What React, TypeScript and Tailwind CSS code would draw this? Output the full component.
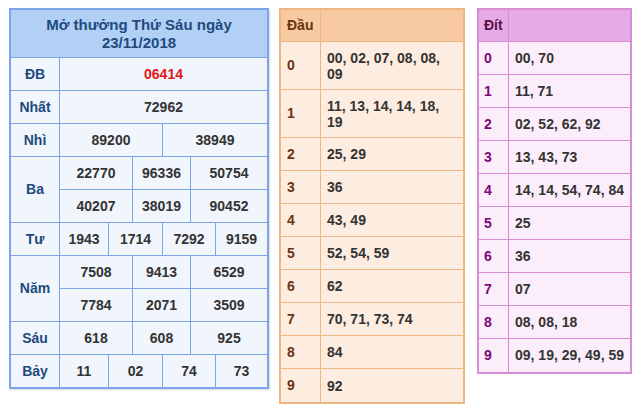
import React from 'react';

const font = { fontFamily: '"Liberation Sans", Arial, sans-serif' };

type Cell = { v: string; w: number; red?: boolean };
type Row = { label: string; lines: Cell[][] };

const results: Row[] = [
  { label: 'ĐB', lines: [[{ v: '06414', w: 207, red: true }]] },
  { label: 'Nhất', lines: [[{ v: '72962', w: 207 }]] },
  { label: 'Nhì', lines: [[{ v: '89200', w: 103 }, { v: '38949', w: 104 }]] },
  {
    label: 'Ba',
    lines: [
      [{ v: '22770', w: 73 }, { v: '96336', w: 58 }, { v: '50754', w: 76 }],
      [{ v: '40207', w: 73 }, { v: '38019', w: 58 }, { v: '90452', w: 76 }],
    ],
  },
  { label: 'Tư', lines: [[{ v: '1943', w: 49 }, { v: '1714', w: 54 }, { v: '7292', w: 53 }, { v: '9159', w: 51 }]] },
  {
    label: 'Năm',
    lines: [
      [{ v: '7508', w: 73 }, { v: '9413', w: 58 }, { v: '6529', w: 76 }],
      [{ v: '7784', w: 73 }, { v: '2071', w: 58 }, { v: '3509', w: 76 }],
    ],
  },
  { label: 'Sáu', lines: [[{ v: '618', w: 73 }, { v: '608', w: 58 }, { v: '925', w: 76 }]] },
  { label: 'Bảy', lines: [[{ v: '11', w: 49 }, { v: '02', w: 54 }, { v: '74', w: 53 }, { v: '73', w: 51 }]] },
];

const dau: [string, string][] = [
  ['0', '00, 02, 07, 08, 08, 09'],
  ['1', '11, 13, 14, 14, 18, 19'],
  ['2', '25, 29'],
  ['3', '36'],
  ['4', '43, 49'],
  ['5', '52, 54, 59'],
  ['6', '62'],
  ['7', '70, 71, 73, 74'],
  ['8', '84'],
  ['9', '92'],
];

const dit: [string, string][] = [
  ['0', '00, 70'],
  ['1', '11, 71'],
  ['2', '02, 52, 62, 92'],
  ['3', '13, 43, 73'],
  ['4', '14, 14, 54, 74, 84'],
  ['5', '25'],
  ['6', '36'],
  ['7', '07'],
  ['8', '08, 08, 18'],
  ['9', '09, 19, 29, 49, 59'],
];

function ResultTable() {
  return (
    <div className="w-[260px] border-2 border-[#7ba4e9] bg-[#f1f5fc] shadow-[1px_1px_2px_rgba(0,0,0,0.15)]">
      {/* Header */}
      <div className="h-[48px] flex flex-col items-center justify-center bg-[#b2cff6] border-b border-[#7ba4e9] text-[15px] font-bold leading-[18px] text-[#1e4a7e]">
        <span>Mở thưởng Thứ Sáu ngày</span>
        <span>23/11/2018</span>
      </div>

      {results.map((row, i) => (
        <div
          key={row.label}
          className={`flex ${i < results.length - 1 ? 'border-b border-[#7ba4e9]' : ''}`}
        >
          <div className="w-[49px] shrink-0 flex items-center justify-center border-r border-[#7ba4e9] text-[14px] font-bold text-[#1e4a7e]">
            {row.label}
          </div>
          <div className="flex-1 flex flex-col">
            {row.lines.map((line, li) => (
              <div
                key={li}
                className={`flex ${li < row.lines.length - 1 ? 'h-[33px] border-b border-[#7ba4e9]' : 'h-[32px]'}`}
              >
                {line.map((c, ci) => (
                  <div
                    key={ci}
                    style={{ width: c.w }}
                    className={`flex items-center justify-center text-[14px] font-bold ${
                      ci < line.length - 1 ? 'border-r border-[#7ba4e9]' : ''
                    } ${c.red ? 'text-[#e01818]' : 'text-[#333333]'}`}
                  >
                    {c.v}
                  </div>
                ))}
              </div>
            ))}
          </div>
        </div>
      ))}
    </div>
  );
}

function DauTable() {
  return (
    <div className="w-[186px] border-2 border-[#efb583] bg-[#fdece0]">
      <div className="flex h-[32px] bg-[#f8caa1] border-b border-[#efb583]">
        <div className="w-[40px] shrink-0 flex items-center pl-[6px] border-r border-[#efb583] text-[14px] font-bold text-[#6b3410]">
          Đầu
        </div>
        <div className="flex-1" />
      </div>
      {dau.map(([k, v], i) => (
        <div
          key={k}
          className={`flex ${i < 2 ? 'h-[48px]' : 'h-[33px]'} ${i < dau.length - 1 ? 'border-b border-[#efb583]' : ''}`}
        >
          <div className="w-[40px] shrink-0 flex items-center pl-[6px] border-r border-[#efb583] text-[14px] font-bold text-[#6b3410]">
            {k}
          </div>
          <div className="flex-1 flex items-center pl-[6px] pr-[14px] text-[14px] font-bold leading-[16px] text-[#333333]">
            {v}
          </div>
        </div>
      ))}
    </div>
  );
}

function DitTable() {
  return (
    <div className="w-[155px] border-2 border-[#d68fd6] bg-[#fcedfb]">
      <div className="flex h-[32px] bg-[#e6abe6] border-b border-[#d68fd6]">
        <div className="w-[30px] shrink-0 flex items-center pl-[5px] border-r border-[#d68fd6] text-[14px] font-bold text-[#5a1046]">
          Đít
        </div>
        <div className="flex-1" />
      </div>
      {dit.map(([k, v], i) => (
        <div
          key={k}
          className={`flex h-[33px] ${i < dit.length - 1 ? 'border-b border-[#d68fd6]' : ''}`}
        >
          <div className="w-[30px] shrink-0 flex items-center pl-[5px] border-r border-[#d68fd6] text-[14px] font-bold text-[#7a0a78]">
            {k}
          </div>
          <div className="flex-1 flex items-center pl-[6px] text-[14px] font-bold text-[#333333]">
            {v}
          </div>
        </div>
      ))}
    </div>
  );
}

export default function App() {
  return (
    <div style={font} className="w-[644px] h-[411px] bg-white flex items-start pt-[8px] pl-[9px]">
      <ResultTable />
      <div className="ml-[10px]">
        <DauTable />
      </div>
      <div className="ml-[12px]">
        <DitTable />
      </div>
    </div>
  );
}
